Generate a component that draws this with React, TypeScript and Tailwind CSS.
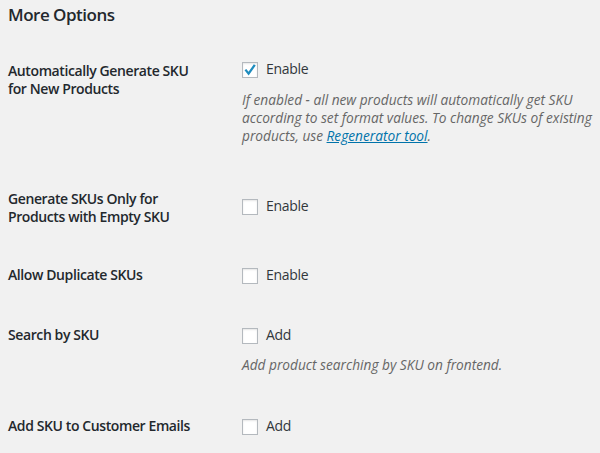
import type { ReactNode } from 'react'

const FONT = { fontFamily: '"Open Sans", "Noto Sans", Arial, sans-serif' }

function Checkbox({ checked }: { checked?: boolean }) {
  return (
    <span className="relative mt-[2px] block w-4 h-4 shrink-0 bg-white border border-[#b4b9be] shadow-[inset_0_1px_2px_rgba(0,0,0,0.1)]">
      {checked && (
        <svg viewBox="0 0 16 16" className="absolute -left-px -top-px w-4 h-4">
          <path d="M3.4 7.6 L6.6 11.6 L12.8 2.8" fill="none" stroke="#1e8cbe" strokeWidth="2.3" />
        </svg>
      )}
    </span>
  )
}

function Row({
  label,
  text,
  checked,
  gap,
  offset = 0,
  children,
}: {
  label: ReactNode
  text: string
  checked?: boolean
  gap: number
  offset?: number
  children?: ReactNode
}) {
  return (
    <div className="flex items-start" style={{ marginTop: gap }}>
      <div className="w-[234px] shrink-0 text-[14px] leading-[18px] font-semibold tracking-[-0.4px]">{label}</div>
      <div style={{ marginTop: offset }}>
        <label className="flex items-start gap-2">
          <Checkbox checked={checked} />
          <span className="text-[14px] leading-[18px] text-[#32373c] tracking-[-0.3px]">{text}</span>
        </label>
        {children}
      </div>
    </div>
  )
}

export default function App() {
  return (
    <div className="min-h-screen bg-[#f1f1f1] text-[#23282d] pl-2 overflow-hidden" style={FONT}>
      <h2 className="pt-[3px] text-[17px] leading-[24px] font-semibold tracking-[-0.5px]">More Options</h2>

      <Row
        gap={35}
        offset={-2}
        checked
        text="Enable"
        label={
          <>
            Automatically Generate SKU
            <br />
            for New Products
          </>
        }
      >
        <p className="mt-[13px] text-[13.7px] leading-[18px] italic text-[#666] whitespace-nowrap">
          If enabled - all new products will automatically get SKU
          <br />
          according to set format values. To change SKUs of existing
          <br />
          products, use{' '}
          <a href="#" className="text-[#0073aa] underline">
            Regenerator tool
          </a>
          .
        </p>
      </Row>

      <Row
        gap={45}
        offset={7}
        text="Enable"
        label={
          <>
            Generate SKUs Only for
            <br />
            Products with Empty SKU
          </>
        }
      />

      <Row gap={40} text="Enable" label="Allow Duplicate SKUs" />

      <Row gap={42} text="Add" label="Search by SKU">
        <p className="mt-[12px] text-[13.7px] leading-[18px] italic text-[#666] whitespace-nowrap">
          Add product searching by SKU on frontend.
        </p>
      </Row>

      <Row gap={43} text="Add" label="Add SKU to Customer Emails" />
    </div>
  )
}
